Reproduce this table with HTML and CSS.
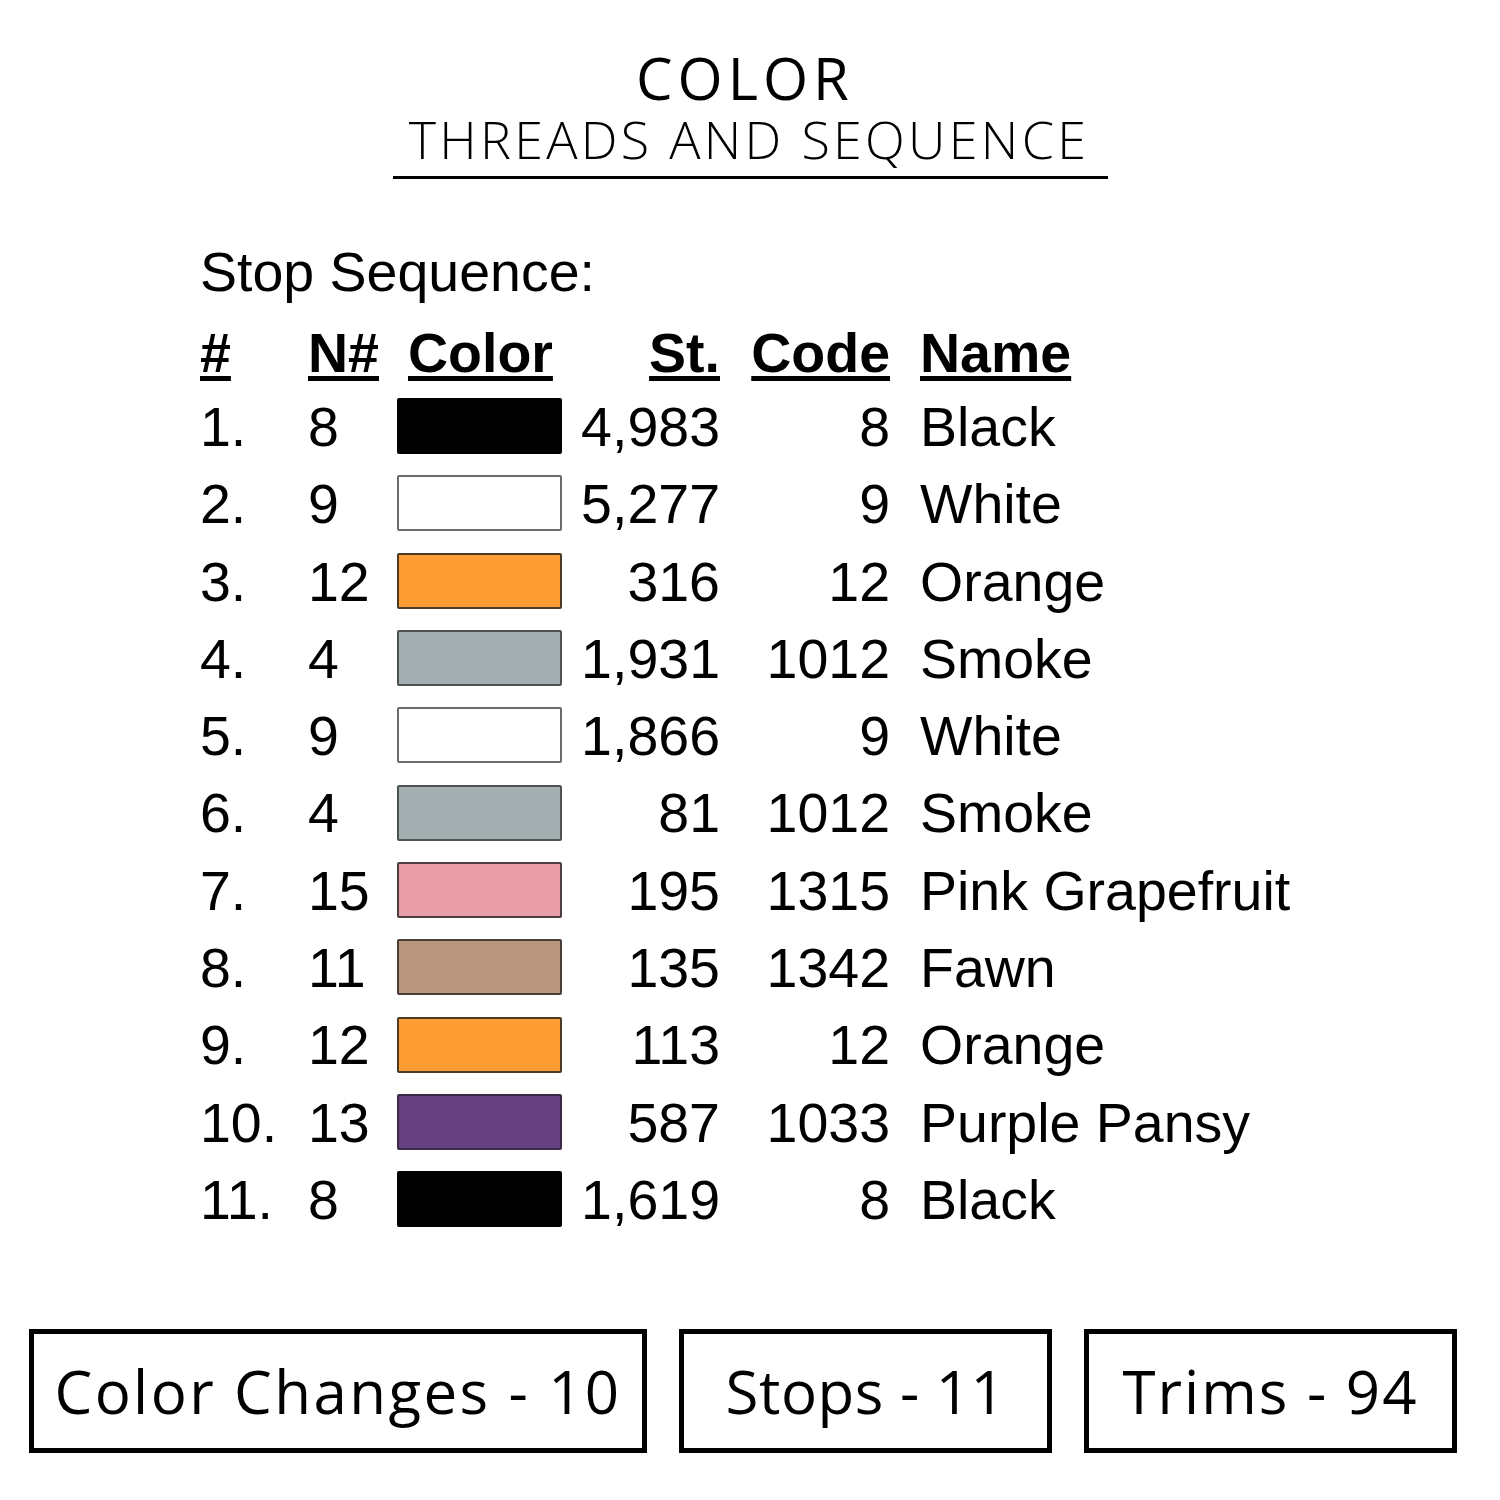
FILE: index.html
```html
<!DOCTYPE html>
<html>
<head>
<meta charset="utf-8">
<link rel="stylesheet" href="styles.css">
</head>
<body>
<div class="page">
  <header class="heading">
    <div class="title">COLOR</div>
    <div class="subtitle-wrap"><div class="subtitle">THREADS AND SEQUENCE</div></div>
  </header>

  <section class="seq">
    <div class="seq-label">Stop Sequence:</div>
    <div class="row head">
      <span class="c-num"><u>#</u></span>
      <span class="c-n"><u>N#</u></span>
      <span class="c-color"><u>Color</u></span>
      <span class="c-st"><u>St.</u></span>
      <span class="c-code"><u>Code</u></span>
      <span class="c-name"><u>Name</u></span>
    </div>
    <div class="row"><span class="c-num">1.</span><span class="c-n">8</span><span class="c-color"><i class="sw sw-black"></i></span><span class="c-st">4,983</span><span class="c-code">8</span><span class="c-name">Black</span></div>
    <div class="row"><span class="c-num">2.</span><span class="c-n">9</span><span class="c-color"><i class="sw sw-white"></i></span><span class="c-st">5,277</span><span class="c-code">9</span><span class="c-name">White</span></div>
    <div class="row"><span class="c-num">3.</span><span class="c-n">12</span><span class="c-color"><i class="sw sw-orange"></i></span><span class="c-st">316</span><span class="c-code">12</span><span class="c-name">Orange</span></div>
    <div class="row"><span class="c-num">4.</span><span class="c-n">4</span><span class="c-color"><i class="sw sw-smoke"></i></span><span class="c-st">1,931</span><span class="c-code">1012</span><span class="c-name">Smoke</span></div>
    <div class="row"><span class="c-num">5.</span><span class="c-n">9</span><span class="c-color"><i class="sw sw-white"></i></span><span class="c-st">1,866</span><span class="c-code">9</span><span class="c-name">White</span></div>
    <div class="row"><span class="c-num">6.</span><span class="c-n">4</span><span class="c-color"><i class="sw sw-smoke"></i></span><span class="c-st">81</span><span class="c-code">1012</span><span class="c-name">Smoke</span></div>
    <div class="row"><span class="c-num">7.</span><span class="c-n">15</span><span class="c-color"><i class="sw sw-pink"></i></span><span class="c-st">195</span><span class="c-code">1315</span><span class="c-name">Pink Grapefruit</span></div>
    <div class="row"><span class="c-num">8.</span><span class="c-n">11</span><span class="c-color"><i class="sw sw-fawn"></i></span><span class="c-st">135</span><span class="c-code">1342</span><span class="c-name">Fawn</span></div>
    <div class="row"><span class="c-num">9.</span><span class="c-n">12</span><span class="c-color"><i class="sw sw-orange"></i></span><span class="c-st">113</span><span class="c-code">12</span><span class="c-name">Orange</span></div>
    <div class="row"><span class="c-num">10.</span><span class="c-n">13</span><span class="c-color"><i class="sw sw-purple"></i></span><span class="c-st">587</span><span class="c-code">1033</span><span class="c-name">Purple Pansy</span></div>
    <div class="row"><span class="c-num">11.</span><span class="c-n">8</span><span class="c-color"><i class="sw sw-black"></i></span><span class="c-st">1,619</span><span class="c-code">8</span><span class="c-name">Black</span></div>
  </section>

  <footer class="stats">
    <div class="stat stat-wide">Color Changes - 10</div>
    <div class="stat stat-stops">Stops - 11</div>
    <div class="stat">Trims - 94</div>
  </footer>
</div>
</body>
</html>
```

FILE: styles.css
```css
html, body {
  margin: 0;
  padding: 0;
  background: #ffffff;
  color: #000000;
}

.page {
  width: 1500px;
  height: 1500px;
  overflow: hidden;
}

.heading {
  padding-top: 56px;
  display: flex;
  flex-direction: column;
  align-items: center;
  font-family: "Open Sans", "Liberation Sans", sans-serif;
}

.title {
  font-size: 58px;
  font-weight: 500;
  line-height: 44px;
  letter-spacing: 5px;
  margin-left: -10px;
}

.subtitle-wrap {
  width: 715px;
  border-bottom: 3px solid #000;
  display: flex;
  justify-content: center;
  margin-top: 17px;
  padding-bottom: 15px;
}

.subtitle {
  font-size: 52px;
  font-weight: 300;
  line-height: 44px;
  letter-spacing: 3.3px;
  margin-left: -2px;
}

.seq {
  margin-top: 55px;
  margin-left: 200px;
  font-family: "Liberation Sans", Arial, sans-serif;
  font-size: 55.5px;
}

.seq-label {
  line-height: 77px;
  height: 77px;
  margin-bottom: 6px;
}

.row {
  display: grid;
  grid-template-columns: 108px 89px 165px 158px 170px auto;
  align-items: center;
  height: 77.3px;
  line-height: 77.3px;
  white-space: nowrap;
}

.row.head {
  height: 72px;
  line-height: 72px;
  font-weight: 700;
}

.row.head u {
  text-decoration-thickness: 5px;
  text-underline-offset: 4px;
}

.row.head .c-color {
  padding-left: 11px;
}

.c-st,
.c-code {
  text-align: right;
}

.c-name {
  padding-left: 30px;
}

.c-color {
  display: flex;
  align-items: center;
  height: 100%;
}

.sw {
  display: block;
  width: 165px;
  height: 56px;
  margin-top: -3px;
  box-sizing: border-box;
  border: 2px solid #4a4a4a;
  border-radius: 2px;
}

.sw-black { background: #000000; border-color: #000000; }
.sw-white { background: #ffffff; border-color: #6b6b6b; }
.sw-orange { background: #ff9b33; border-color: #4a3a26; }
.sw-smoke { background: #a4afb2; border-color: #4d5254; }
.sw-pink { background: #e89ca8; border-color: #4e3d3f; }
.sw-fawn { background: #b9977f; border-color: #4a3f38; }
.sw-purple { background: #65417f; border-color: #3a2a46; }

.stats {
  margin-top: 90px;
  margin-left: 29px;
  display: flex;
  gap: 32px;
  font-family: "Open Sans", "Liberation Sans", sans-serif;
}

.stat {
  box-sizing: border-box;
  width: 373px;
  height: 124px;
  border: 5px solid #000;
  display: flex;
  align-items: center;
  justify-content: center;
  font-size: 60px;
  font-weight: 400;
  letter-spacing: 2px;
  white-space: nowrap;
}

.stat-wide {
  width: 618px;
  letter-spacing: 2.4px;
}

.stat-stops {
  letter-spacing: 0.5px;
}
```
